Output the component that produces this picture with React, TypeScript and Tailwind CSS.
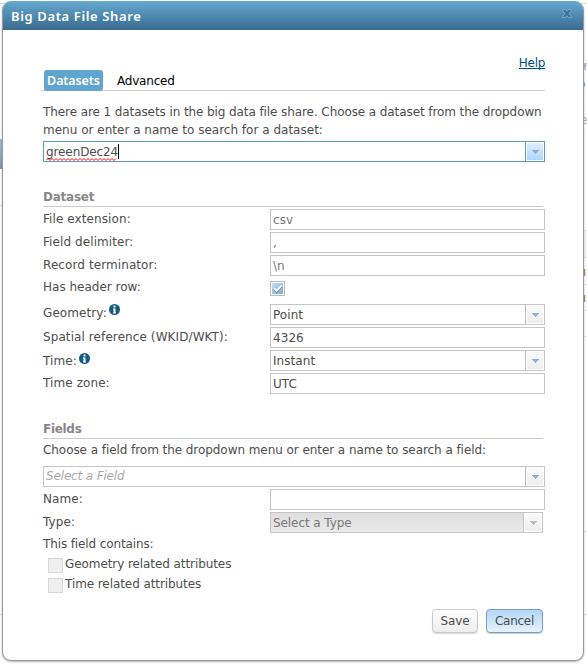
import React from "react";

type Tone = "blue" | "normal" | "disabled";

function Arrow({ tone = "normal" }: { tone?: Tone }) {
  const box = {
    blue: "border-[#5a9bbd] from-[#e0efff] to-[#abd6ff]",
    normal: "border-[#b5bcc7] from-[#fafafa] to-[#eeeeee]",
    disabled: "border-[#c5c5c5] from-[#f8f8f8] to-[#eeeeee]",
  }[tone];
  return (
    <div className={`w-[19px] shrink-0 border-l border-solid bg-white p-px ${box}`}>
      <div className={`flex h-full w-full items-center justify-center bg-gradient-to-b ${box}`}>
        <svg width="7" height="4" viewBox="0 0 7 4" shapeRendering="crispEdges" className={tone === "disabled" ? "text-[#bcbcbc]" : "text-[#92aed0]"}>
          <path d="M0 0h7v1H6v1H5v1H4v1H3V3H2V2H1V1H0z" fill="currentColor" />
        </svg>
      </div>
    </div>
  );
}

function Field({ children, arrow, className = "border-[#c5c5c5] w-[275px]" }: { children?: React.ReactNode; arrow?: Tone; className?: string }) {
  return (
    <div className={`flex h-[21px] shrink-0 border ${className}`}>
      <div className="flex-1 pl-[2px] leading-[20px] tracking-[0.06px]">{children}</div>
      {arrow && <Arrow tone={arrow} />}
    </div>
  );
}

function Row({ label, children, info }: { label: React.ReactNode; children: React.ReactNode; info?: "top" | "mid" }) {
  return (
    <div className="flex h-[23px]">
      <div className={`flex w-[227px] shrink-0 tracking-[0.09px] ${info === "top" ? "leading-[19px]" : info === "mid" ? "leading-[23px]" : "leading-[20px]"}`}>
        {label}
        {info && (
          <svg width="11" height="11" viewBox="0 0 11 11" className={info === "mid" ? "ml-[2px] mt-[3px]" : "ml-[2px]"}>
            <circle cx="5.5" cy="5.5" r="5.5" fill="#155a83" />
            <path d="M4.5 1.5h2v2h-2zM4 4.5h2.5v4H7v1H4v-1h.5v-3H4z" fill="white" />
          </svg>
        )}
      </div>
      {children}
    </div>
  );
}

function T({ children, className = "" }: { children: React.ReactNode; className?: string }) {
  return <span className={`whitespace-pre ${className}`}>{children}</span>;
}

export default function App() {
  return (
    <div className="relative h-[664px] w-[587px] overflow-hidden bg-white font-['DejaVu_Sans',sans-serif] text-[12px] text-[#4d4d4d]">
      <div className="absolute left-0 top-[3px] h-px w-full bg-[#ddd]" />
      <div className="absolute left-0 top-[139px] h-[30px] w-[3px] bg-gradient-to-b from-[#a0c1d5] to-[#7a9bb1]" />
      <div className="absolute left-0 top-[205px] h-px w-[3px] bg-[#ddd]" />
      <div className="absolute left-0 top-[614px] h-px w-full bg-[#ddd]" />
      <div className="absolute left-[584px] top-[531px] h-px w-[3px] bg-[#ddd]" />
      <div className="absolute left-[584px] top-[230px] h-[28px] w-[3px] border-y border-[#e5e5e5] bg-[#f5f5f5]" />
      <div className="absolute left-[584px] top-[284px] h-[27px] w-[3px] border-y border-[#e5e5e5]" />
      <div className="absolute left-[584px] top-[336px] h-px w-[3px] bg-[#e5e5e5]" />
      <div className="absolute left-[578px] top-[57px] tracking-[-2px] text-[#aaa]">er</div>
      <div className="absolute left-[578px] top-[75px] text-[#5689ab]">o</div>
      <div className="absolute left-[580px] top-[111px] text-[#aaa]">e</div>
      <div className="absolute left-[583px] top-[269px] h-[7px] w-[2px] bg-[#7291bd]" />
      <div className="absolute left-[585px] top-[269px] h-[7px] w-[2px] bg-[#f8edcd]" />
      <div className="absolute left-[583px] top-[295px] h-[7px] w-[2px] bg-[#7291bd]" />
      <div className="absolute left-[585px] top-[295px] h-[7px] w-[2px] bg-[#f8edcd]" />

      <div className="relative ml-[2px] mt-px h-[660px] w-[582px] overflow-hidden rounded-[9px] border border-t-0 border-[#999] bg-white shadow-[0_1px_2px_rgba(0,0,0,.3)]">
        <div className="flex h-[29px] items-center justify-between bg-gradient-to-b from-[#65a9d1] to-[#3a6b90] pl-2 pr-[11px] text-white">
          <T className="mt-[2px] font-['Noto_Sans',sans-serif] text-[13px] font-semibold tracking-[0.63px]">Big Data File Share</T>
          <svg width="10" height="9" viewBox="0 0 10 9" className="mb-1">
            <path d="M.5.5h3L5 2.2 6.5.5h3v1L7 4.5l2.5 3v1h-3L5 6.8 3.5 8.5h-3v-1L3 4.5l-2.5-3z" fill="#4179a1" stroke="#8dbdda" strokeWidth=".7" />
            <path d="M2 1.5l6 6M8 1.5l-6 6" stroke="#356b91" strokeWidth="1" />
          </svg>
        </div>

        <div className="pl-[40px]">
          <div className="flex h-[40px] w-[502px] justify-end pt-[24px] leading-[18px] text-[#00507d]">
            <T className="h-[15px] border-b border-[#00507d] tracking-[-0.3px]">Help</T>
          </div>
          <div className="-ml-[2px] flex h-[21px] w-[504px] border-b border-[#ccc] pl-[3px]">
            <div className="flex h-[21px] w-[59px] shrink-0 justify-center rounded-[3px] bg-[#60a5cf] leading-[21px] text-white">
              <T className="font-['Noto_Sans',sans-serif] text-[12.5px] font-semibold tracking-[-0.1px]">Datasets</T>
            </div>
            <T className="ml-[14px] leading-[22px] tracking-[-0.2px] text-black">Advanced</T>
          </div>

          <div className="h-[50px] pt-[12px] leading-[18px]">
            <T className="block tracking-[-0.09px]">There are 1 datasets in the big data file share. Choose a dataset from the dropdown</T>
            <T className="block tracking-[0.01px]">menu or enter a name to search for a dataset:</T>
          </div>
          <Field className="w-[502px] border-[#5a9bbd]" arrow="blue">
            <div className="relative inline-block h-[19px]">
              <T className="tracking-[-0.1px]">greenDec24</T>
              <svg width="72" height="3" viewBox="0 0 72 3" className="absolute bottom-0 left-0">
                <path d="M0 2.5l2-2 2 2 2-2 2 2 2-2 2 2 2-2 2 2 2-2 2 2 2-2 2 2 2-2 2 2 2-2 2 2 2-2 2 2 2-2 2 2 2-2 2 2 2-2 2 2 2-2 2 2 2-2 2 2 2-2 2 2 2-2 2 2 2-2 2 2 2-2" fill="none" stroke="red" strokeWidth="1" />
              </svg>
              <i className="absolute left-[72px] top-[2px] h-[15px] w-px bg-black" />
            </div>
          </Field>

          <div className="mt-[26px] h-[19px] w-[500px] border-b border-[#ccc] font-bold leading-[18px] text-[#888]">
            <T className="tracking-[-0.25px]">Dataset</T>
          </div>
          <div className="mt-[2px]">
            <Row label="File extension:"><Field><T className="text-[#777]">csv</T></Field></Row>
            <Row label="Field delimiter:"><Field><T className="text-[#777]">,</T></Field></Row>
            <Row label="Record terminator:"><Field><T className="text-[#777]">\n</T></Field></Row>
            <div className="flex h-[26px]">
              <div className="w-[227px] leading-[18px]">Has header row:</div>
              <div className="mt-[3px] h-[15px] w-[15px] border border-[#b5bcc7] bg-white p-px">
                <svg width="11" height="11" viewBox="0 0 11 11" className="bg-gradient-to-br from-[#c1def2] to-[#7caed3]">
                  <path d="M2 5.2l2.5 3L9.5 3" fill="none" stroke="#5489af" strokeWidth="3" />
                  <path d="M2 4.8l2.5 3L9.5 2.5" fill="none" stroke="white" strokeWidth="2" />
                </svg>
              </div>
            </div>
            <Row label="Geometry:" info="top"><Field arrow="normal">Point</Field></Row>
            <Row label="Spatial reference (WKID/WKT):"><Field>4326</Field></Row>
            <Row label="Time:" info="mid"><Field arrow="normal">Instant</Field></Row>
            <Row label="Time zone:"><Field>UTC</Field></Row>
          </div>

          <div className="mt-[23px] h-[20px] w-[500px] border-b border-[#ccc] font-bold leading-[20px] tracking-[-0.3px] text-[#888]">Fields</div>
          <div className="h-[27px] pt-[2px] leading-[18px]"><T className="tracking-[-0.06px]">Choose a field from the dropdown menu or enter a name to search a field:</T></div>
          <Field arrow="normal" className="w-[502px] border-[#c5c5c5]"><T className="block h-[19px] leading-[18px] italic tracking-[-0.15px] text-[#aaa]">Select a Field</T></Field>
          <div className="mt-[2px]">
            <Row label="Name:"><Field /></Row>
            <Row label="Type:"><Field arrow="disabled" className="w-[273px] border-[#c5c5c5] bg-gradient-to-b from-[#dedede] to-[#eaeaea] text-[#777]"><T className="tracking-[-0.08px]">Select a Type</T></Field></Row>
          </div>
          <div className="h-[22px] leading-[18px] tracking-[-0.12px]">This field contains:</div>
          <div className="flex h-[20px] pl-[5px]">
            <i className="mt-[1px] h-[15px] w-[15px] border border-[#d8d8d8] bg-[#efefef]" />
            <span className="ml-[2px] leading-[14px] tracking-[-0.08px]">Geometry related attributes</span>
          </div>
          <div className="flex h-[20px] pl-[5px]">
            <i className="mt-[1px] h-[15px] w-[15px] border border-[#d8d8d8] bg-[#efefef]" />
            <span className="ml-[2px] leading-[14px] tracking-[-0.08px]">Time related attributes</span>
          </div>
          <div className="flex w-[500px] justify-end gap-2 pt-[12px]">
            <button className="h-[24px] w-[46px] rounded-[4px] border border-[#c9c9c9] bg-gradient-to-b from-white to-[#ededed] leading-[22px] tracking-[-0.1px] shadow-[0_1px_1px_rgba(0,0,0,.15)]">Save</button>
            <button className="h-[24px] w-[57px] rounded-[4px] border border-[#769dc0] bg-gradient-to-b from-[#b4d6f6] to-[#e5f2fe] leading-[22px] tracking-[-0.25px] shadow-[0_1px_1px_rgba(0,0,0,.2)]">Cancel</button>
          </div>
        </div>
      </div>
    </div>
  );
}
